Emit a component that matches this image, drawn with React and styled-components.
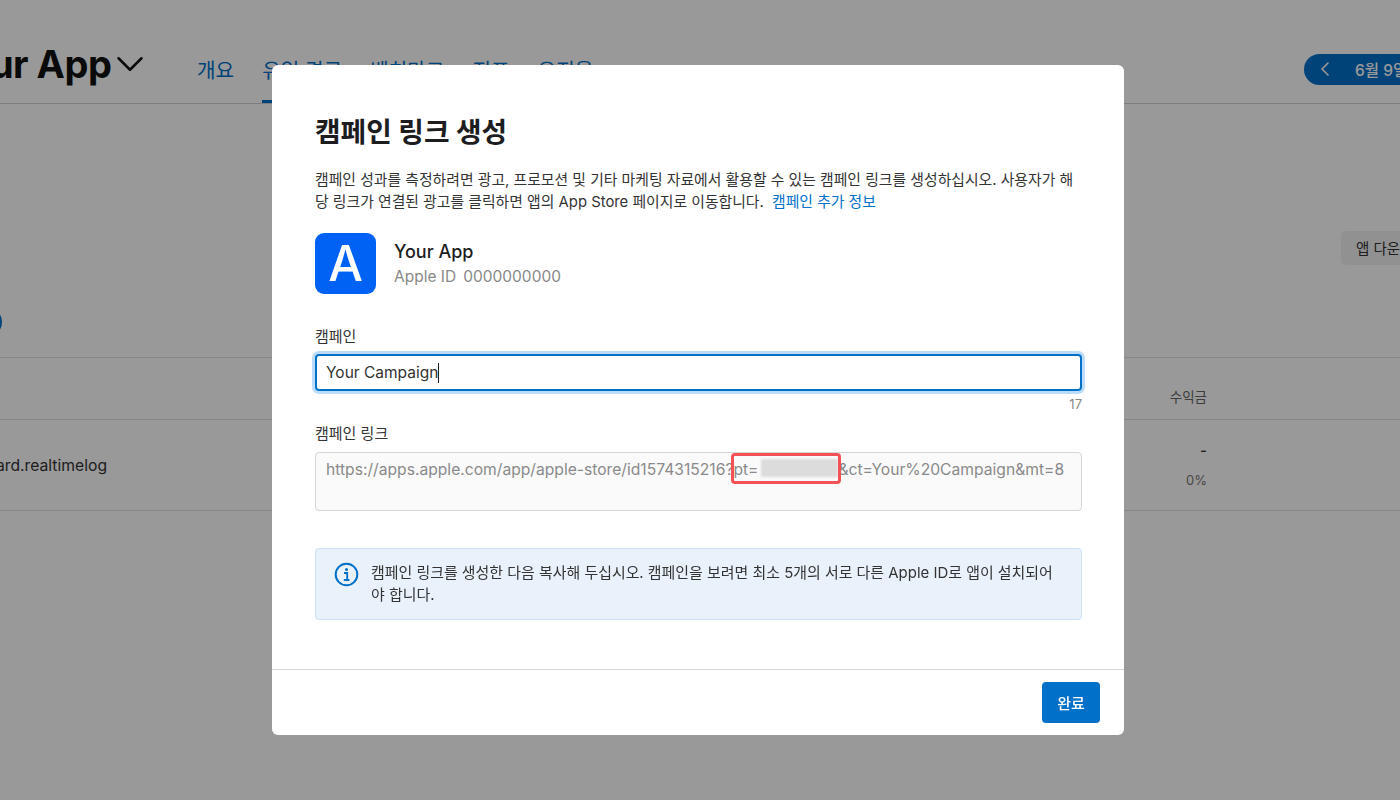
import React from 'react';
import styled, { createGlobalStyle } from 'styled-components';
import { ChevronDown, ChevronLeft } from 'lucide-react';

const GlobalStyle = createGlobalStyle`
	html, body {
		margin: 0;
		padding: 0;
		background: #fff;
		overflow: hidden;
	}
	* {
		box-sizing: border-box;
	}
	body {
		font-family: Inter, "Noto Sans CJK KR", sans-serif;
		color: #333;
	}
`;

const Page = styled.div`
	width: 1400px;
	height: 800px;
	overflow: hidden;
`;

const Header = styled.header`
	display: flex;
	align-items: flex-start;
	height: 104px;
	border-bottom: 1px solid #d2d2d7;
`;

const AppName = styled.div`
	display: flex;
	align-items: center;
	width: 253px;
	height: 103px;
	margin-left: -56px;
	padding-top: 24px;
	flex-shrink: 0;
	font-size: 38px;
	font-weight: 700;
	letter-spacing: -0.5px;
	color: #111;
	white-space: nowrap;
	svg {
		margin: 1px 0 0 -4px;
		flex-shrink: 0;
	}
`;

const Tabs = styled.nav`
	display: flex;
	gap: 28px;
	height: 103px;
`;

const Tab = styled.a`
	display: flex;
	align-items: center;
	height: 100%;
	padding-top: 38px;
	font-size: 20.2px;
	color: #0070c9;
	white-space: nowrap;
	border-bottom: 3px solid ${(props) => (props.active ? '#0070c9' : 'transparent')};
`;

const DatePill = styled.div`
	display: flex;
	align-items: center;
	gap: 18px;
	height: 31px;
	margin: 54px 0 0 auto;
	width: 96px;
	padding: 0 0 2px 9px;
	background: #0070c9;
	border-radius: 16px 0 0 16px;
	color: #fff;
	font-size: 15.5px;
	font-weight: 500;
	white-space: nowrap;
	overflow: hidden;
	svg {
		flex-shrink: 0;
	}
`;

const Toolbar = styled.section`
	display: flex;
	align-items: flex-start;
	justify-content: flex-end;
	height: 254px;
	padding-top: 127px;
	border-bottom: 1px solid #e0e0e0;
	position: relative;
`;

const DownloadButton = styled.div`
	width: 59px;
	height: 34px;
	padding: 6px 0 0 15px;
	background: #f2f2f2;
	border-radius: 5px 0 0 5px;
	font-size: 14.5px;
	white-space: nowrap;
	overflow: hidden;
`;

const InfoDot = styled.span`
	position: absolute;
	left: -10px;
	top: 208px;
	width: 12px;
	height: 20px;
	border-radius: 50%;
	background: #0070c9;
`;

const TableHead = styled.div`
	display: flex;
	justify-content: flex-end;
	height: 62px;
	padding: 28px 193px 0 0;
	border-bottom: 1px solid #e0e0e0;
	font-size: 13.5px;
	color: #666;
`;

const TableRow = styled.div`
	display: flex;
	justify-content: space-between;
	height: 91px;
	padding-right: 193px;
	border-bottom: 1px solid #e0e0e0;
`;

const RowName = styled.div`
	margin: 36px 0 0 -4px;
	font-size: 15.7px;
	color: #333;
	white-space: nowrap;
`;

const RowValue = styled.div`
	display: flex;
	flex-direction: column;
	align-items: flex-end;
	gap: 12px;
	padding-top: 21px;
	font-size: 15px;
	font-weight: 500;
	color: #333;
`;

const RowPercent = styled.span`
	font-size: 13px;
	font-weight: 400;
	color: #777;
`;

const Overlay = styled.div`
	position: fixed;
	inset: 0;
	display: flex;
	justify-content: center;
	padding-top: 65px;
	background: rgba(0, 0, 0, 0.4);
`;

const Modal = styled.div`
	display: flex;
	flex-direction: column;
	width: 852px;
	height: 670px;
	margin-left: -4px;
	background: #fff;
	border-radius: 6px;
`;

const ModalBody = styled.div`
	flex: 1;
	padding: 48px 42px 0 43px;
`;

const Title = styled.h1`
	margin: 0;
	font-size: 27.8px;
	line-height: 38px;
	font-weight: 700;
	color: #1d1d1f;
`;

const Description = styled.p`
	margin: 18px 0 0;
	font-size: 14.85px;
	line-height: 22px;
	color: #333;
	white-space: nowrap;
`;

const InlineLink = styled.a`
	margin-left: 4px;
	color: #0070c9;
`;

const AppRow = styled.div`
	display: flex;
	align-items: center;
	gap: 18px;
	margin-top: 20px;
`;

const AppIcon = styled.div`
	display: flex;
	align-items: center;
	justify-content: center;
	width: 61px;
	height: 61px;
	border-radius: 9px;
	background: #0062f5;
	color: #fff;
	font-size: 49px;
	font-weight: 500;
	line-height: 1;
`;

const AppInfo = styled.div`
	padding-top: 2px;
`;

const AppTitle = styled.div`
	font-size: 18px;
	line-height: 24px;
	font-weight: 500;
	color: #1d1d1f;
`;

const AppMeta = styled.div`
	display: flex;
	gap: 7px;
	margin-top: 1px;
	font-size: 15.5px;
	line-height: 24px;
	color: #888;
`;

const Field = styled.div`
	margin-top: ${(props) => props.top}px;
`;

const Label = styled.div`
	font-size: 15px;
	line-height: 20px;
	color: #333;
`;

const CampaignInput = styled.div`
	display: flex;
	align-items: center;
	height: 37px;
	margin-top: 7px;
	padding: 0 9px;
	border: 2px solid #0070c9;
	border-radius: 4px;
	box-shadow: 0 0 0 3px #bcdcfb;
	font-size: 15.5px;
	color: #333;
`;

const Caret = styled.span`
	width: 1px;
	height: 20px;
	background: #222;
`;

const Counter = styled.div`
	margin-top: 6px;
	text-align: right;
	font-size: 13px;
	line-height: 14px;
	color: #888;
`;

const LinkBox = styled.div`
	height: 59px;
	margin-top: 8px;
	padding: 6px 10px;
	background: #fafafa;
	border: 1px solid #d6d6d6;
	border-radius: 4px;
	font-size: 15.65px;
	line-height: 20px;
	color: #8a8a8a;
	white-space: nowrap;
`;

const Highlight = styled.span`
	position: relative;
	display: inline-block;
	&::after {
		content: '';
		position: absolute;
		inset: -6px -3px -4px -2px;
		border: 3px solid #f25156;
		border-radius: 4px;
	}
`;

const Blurred = styled.span`
	display: inline-block;
	width: 77px;
	height: 18px;
	margin-left: 3px;
	vertical-align: -2px;
	background: #dcdcdc;
	filter: blur(1px);
`;

const Notice = styled.div`
	display: flex;
	gap: 12px;
	height: 72px;
	margin-top: 37px;
	padding: 13px 18px;
	background: #e9f2fb;
	border: 1px solid #cde2f5;
	border-radius: 4px;
	font-size: 14.95px;
	line-height: 22px;
	color: #333;
`;

const NoticeIcon = styled.svg`
	width: 25px;
	height: 25px;
	flex-shrink: 0;
`;

const ModalFooter = styled.div`
	display: flex;
	justify-content: flex-end;
	height: 66px;
	padding: 12px 24px 0 0;
	border-top: 1px solid #d6d6d6;
`;

const DoneButton = styled.button`
	width: 58px;
	height: 41px;
	border: 0;
	border-radius: 4px;
	background: #0070c9;
	color: #fff;
	font-family: inherit;
	font-size: 15px;
	font-weight: 500;
`;

const App = () => {
	return (
		<Page>
			<GlobalStyle />
			<Header>
				<AppName>
					Your App
					<ChevronDown size={46} strokeWidth={1.3} />
				</AppName>
				<Tabs>
					<Tab>개요</Tab>
					<Tab active>유입 경로</Tab>
					<Tab>벤치마크</Tab>
					<Tab>지표</Tab>
					<Tab>유지율</Tab>
				</Tabs>
				<DatePill>
					<ChevronLeft size={24} strokeWidth={1.6} />
					6월 9일
				</DatePill>
			</Header>
			<Toolbar>
				<DownloadButton>앱 다운로드</DownloadButton>
				<InfoDot />
			</Toolbar>
			<TableHead>수익금</TableHead>
			<TableRow>
				<RowName>ard.realtimelog</RowName>
				<RowValue>
					-
					<RowPercent>0%</RowPercent>
				</RowValue>
			</TableRow>
			<Overlay>
				<Modal>
					<ModalBody>
						<Title>캠페인 링크 생성</Title>
						<Description>
							캠페인 성과를 측정하려면 광고, 프로모션 및 기타 마케팅 자료에서 활용할 수 있는 캠페인 링크를 생성하십시오. 사용자가 해
							<br />
							당 링크가 연결된 광고를 클릭하면 앱의 App Store 페이지로 이동합니다. <InlineLink>캠페인 추가 정보</InlineLink>
						</Description>
						<AppRow>
							<AppIcon>A</AppIcon>
							<AppInfo>
								<AppTitle>Your App</AppTitle>
								<AppMeta>
									<span>Apple ID</span>
									<span>0000000000</span>
								</AppMeta>
							</AppInfo>
						</AppRow>
						<Field top={33}>
							<Label>캠페인</Label>
							<CampaignInput>
								Your Campaign
								<Caret />
							</CampaignInput>
							<Counter>17</Counter>
						</Field>
						<Field top={13}>
							<Label>캠페인 링크</Label>
							<LinkBox>
								https://apps.apple.com/app/apple-store/id1574315216?
								<Highlight>
									pt=
									<Blurred />
								</Highlight>
								&amp;ct=Your%20Campaign&amp;mt=8
							</LinkBox>
						</Field>
						<Notice>
							<NoticeIcon viewBox="0 0 25 25">
								<circle cx="12.5" cy="12.5" r="10.8" fill="none" stroke="#0070c9" strokeWidth="2" />
								<circle cx="12.5" cy="7.6" r="1.5" fill="#0070c9" />
								<path d="M10 11h3.2v6.6M9.8 18h5.6" fill="none" stroke="#0070c9" strokeWidth="1.8" />
							</NoticeIcon>
							<div>
								캠페인 링크를 생성한 다음 복사해 두십시오. 캠페인을 보려면 최소 5개의 서로 다른 Apple ID로 앱이 설치되어
								<br />
								야 합니다.
							</div>
						</Notice>
					</ModalBody>
					<ModalFooter>
						<DoneButton>완료</DoneButton>
					</ModalFooter>
				</Modal>
			</Overlay>
		</Page>
	);
};

export default App;
